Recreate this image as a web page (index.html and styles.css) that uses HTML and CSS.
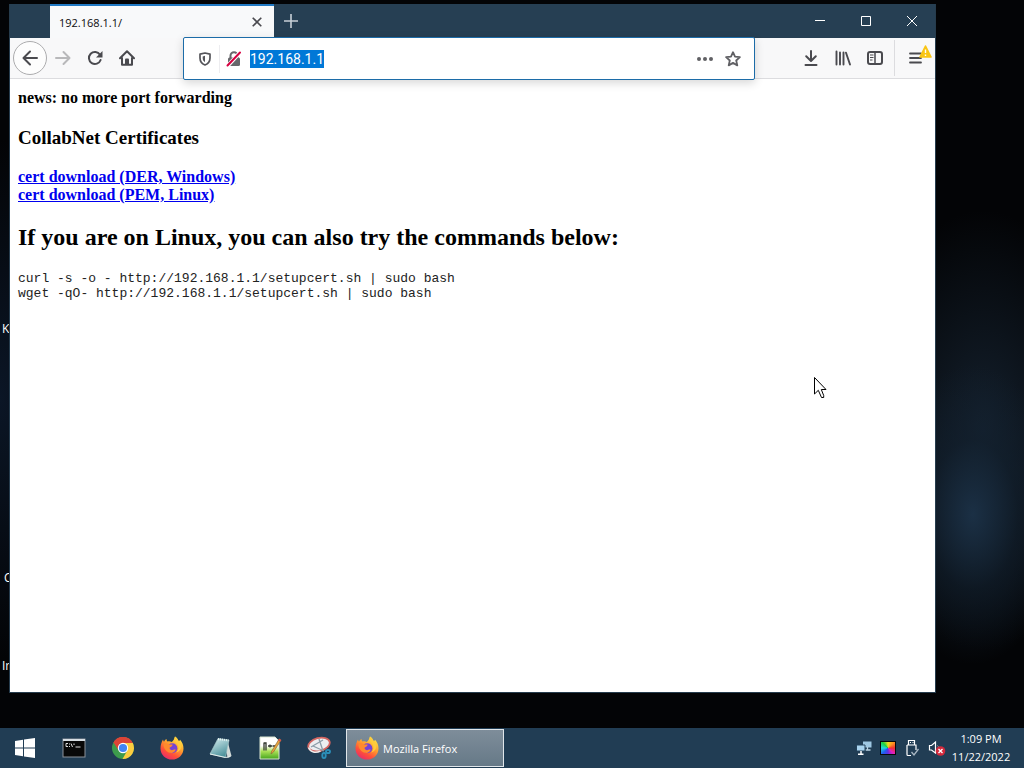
FILE: index.html
```
<!DOCTYPE html>
<html lang="en">
<head>
<meta charset="utf-8">
<title>192.168.1.1/</title>
<link rel="stylesheet" href="styles.css">
</head>
<body>
<svg class="defs" width="0" height="0" aria-hidden="true">
  <defs>
    <linearGradient id="flame" x1="0.8" y1="0" x2="0.2" y2="1">
      <stop offset="0" stop-color="#fff04a"/><stop offset="0.4" stop-color="#ffa02e"/>
      <stop offset="0.7" stop-color="#ff5038"/><stop offset="1" stop-color="#e32673"/>
    </linearGradient>
    <symbol id="firefox" viewBox="0 0 24 24">
      <path fill="url(#flame)" d="M15 .5c2.4 1.300 3.200 3 3.400 4.800 1-.3 1.500-.9 1.700-1.500 2.200 2.400 3.400 5.500 3.400 8.600C23.500 18.800 18.300 23.600 12 23.600S.5 18.800.5 12.500c0-3.500 1-6.500 2.500-9 .2 1 .5 1.600 1 2.200.5-1.200 1.400-2.100 2.500-2.700 0 1 .3 1.900 1 2.500 1.500-.4 3-.2 4.300.5 1.700-1.400 2.800-3.300 3.200-5.500z"/>
      <circle cx="12.300" cy="12.300" r="5" fill="#7543d5"/>
      <path fill="#ff8a2d" d="M3.500 8.500c2-1.500 4.200-1 5.200.1h3.800c.3 1.600-1.200 2.300-2.800 3-.4 1.300.6 2.500 2.200 2.600 1.500 0 2.300-1 3.800-.4-.8 2.300-3.200 3.500-5.600 3-3.700-.8-6.600-4.300-6.600-8.300z"/>
      <path fill="#ffcb3b" d="M15 .5c-1.500 3.200.2 4.800 1.800 6.700 2.300 2.800 2.200 7-.6 9.300 4.300-1 6.300-5.200 4.500-9.400C19.700 5 17 3.500 15 .5z"/>
    </symbol>
  </defs>
</svg>
<div class="desktop">
  <span class="label label-k">K</span>
  <span class="label label-c">C</span>
  <span class="label label-in">Ir</span>

  <main class="workspace">
    <section class="window">
      <header class="titlebar">
        <div class="tab">
          <span class="tab-title">192.168.1.1/</span>
          <button class="tab-close" aria-label="Close tab"><svg width="10" height="10" viewBox="0 0 10 10"><path d="M.7.7l8.600 8.600M9.300.7L.7 9.300" stroke="#4a4a4f" stroke-width="1.600"/></svg></button>
        </div>
        <button class="new-tab" aria-label="New tab"><svg width="14" height="14" viewBox="0 0 14 14"><path d="M7 0v14M0 7h14" stroke="#c8d0d8" stroke-width="1.600"/></svg></button>
        <div class="controls">
          <button aria-label="Minimize"><svg width="12" height="12" viewBox="0 0 12 12"><path d="M1 5.500h10" stroke="#fff"/></svg></button>
          <button aria-label="Maximize"><svg width="12" height="12" viewBox="0 0 12 12"><path d="M1.500 1.500h9v9h-9z" fill="none" stroke="#fff"/></svg></button>
          <button aria-label="Close"><svg width="12" height="12" viewBox="0 0 12 12"><path d="M1 1l10 10M11 1L1 11" stroke="#fff"/></svg></button>
        </div>
      </header>

      <nav class="toolbar">
        <button class="back" aria-label="Back"><svg width="16" height="16" viewBox="0 0 16 16"><path d="M15 8H1.800M8 1.500L1.500 8 8 14.500" fill="none" stroke="#4a4a4f" stroke-width="2" stroke-linecap="round" stroke-linejoin="round"/></svg></button>
        <button class="tool" aria-label="Forward"><svg width="16" height="16" viewBox="0 0 16 16"><path d="M1 8h13.200M8.500 2l6 6-6 6" fill="none" stroke="#b8b8ba" stroke-width="2" stroke-linecap="round" stroke-linejoin="round"/></svg></button>
        <button class="tool" aria-label="Reload"><svg width="16" height="16" viewBox="0 0 16 16"><path d="M13 4.800A6 6 0 1 0 13.600 10" fill="none" stroke="#4a4a4f" stroke-width="2" stroke-linecap="round"/><path d="M15.500 1v6.500H9z" fill="#4a4a4f"/></svg></button>
        <button class="tool" aria-label="Home"><svg width="16" height="16" viewBox="0 0 16 16"><path d="M1 8.200L8 1.200l7 7M3 8v6.800h10V8" fill="none" stroke="#4a4a4f" stroke-width="2" stroke-linecap="round" stroke-linejoin="round"/><path d="M6 15V9.500a1 1 0 0 1 1-1h2a1 1 0 0 1 1 1V15z" fill="#4a4a4f"/></svg></button>
        <div class="urlbar">
          <button class="url-icon" aria-label="Tracking protection"><svg width="14" height="14" viewBox="0 0 14 14"><path d="M7 1L12 2.200V6c0 3.500-2 5.800-5 7-3-1.200-5-3.500-5-7V2.200z" fill="none" stroke="#55555a" stroke-width="1.700" stroke-linejoin="round"/><path d="M7 3.800v6.400C5.300 9.200 4.700 7.800 4.700 6V4.400z" fill="#55555a"/></svg></button>
          <button class="url-icon lock" aria-label="Connection not secure"><svg width="16" height="16" viewBox="0 0 16 16"><path d="M4.500 7V4.800a3.500 3.500 0 0 1 7 0V7" fill="none" stroke="#67676b" stroke-width="2"/><rect x="2" y="6.500" width="12" height="8.500" rx="1.500" fill="#67676b"/><path d="M1 15.500L14.500 1" stroke="#fff" stroke-width="4"/><path d="M1.500 14.500L14 1.500" stroke="#d70040" stroke-width="2" stroke-linecap="round"/></svg></button>
          <input class="url" type="text" value="192.168.1.1" aria-label="Address" spellcheck="false">
          <span class="url-space"></span>
          <button class="url-icon" aria-label="Page actions"><svg width="16" height="16" viewBox="0 0 16 16"><g fill="#606064"><circle cx="2" cy="8" r="2"/><circle cx="8" cy="8" r="2"/><circle cx="14" cy="8" r="2"/></g></svg></button>
          <button class="url-icon" aria-label="Bookmark this page"><svg width="16" height="16" viewBox="0 0 16 16"><path d="M8 1.200l2 4.500 4.900.5-3.700 3.300 1.100 4.900L8 11.900l-4.300 2.500 1.100-4.900L1.100 6.200 6 5.700z" fill="none" stroke="#606064" stroke-width="1.800" stroke-linejoin="round"/></svg></button>
        </div>
        <button class="tool" aria-label="Downloads"><svg width="16" height="16" viewBox="0 0 16 16"><path d="M8 1v9.500M3.200 6.200L8 11l4.800-4.800M2.500 15h11" fill="none" stroke="#4a4a4f" stroke-width="2" stroke-linecap="round" stroke-linejoin="round"/></svg></button>
        <button class="tool" aria-label="Library"><svg width="16" height="16" viewBox="0 0 16 16"><path d="M1.500 1.500v13M5 2.500v12M8.500 2.500v12M11 2.700l4 11.800" fill="none" stroke="#4a4a4f" stroke-width="1.900" stroke-linecap="round"/></svg></button>
        <button class="tool" aria-label="Sidebars"><svg width="16" height="16" viewBox="0 0 16 16"><rect x="1" y="2" width="14" height="12" rx="2" fill="none" stroke="#4a4a4f" stroke-width="2"/><path d="M8 2v12" stroke="#4a4a4f" stroke-width="1.500"/><path d="M3 5h3.500M3 7.500h3.500M3 10h2.500" stroke="#4a4a4f"/></svg></button>
        <button class="tool menu" aria-label="Menu"><svg width="14" height="14" viewBox="0 0 14 14"><path d="M2 2.500h11M2 7h11M2 11.500h11" stroke="#4a4a4f" stroke-width="1.800" stroke-linecap="round"/></svg><svg class="warning" width="13" height="13" viewBox="0 0 13 13"><path d="M6.500 1l5.500 11H1z" fill="#f9c515" stroke="#f9c515" stroke-width="1.600" stroke-linejoin="round"/><path d="M6.500 4.500V8M6.500 9.500V11" stroke="#fff" stroke-width="1.400"/></svg></button>
      </nav>

      <article class="page">
        <h4>news: no more port forwarding</h4>
        <h3>CollabNet Certificates</h3>
        <p class="links"><a href="#der">cert download (DER, Windows)</a><br><a href="#pem">cert download (PEM, Linux)</a></p>
        <h2>If you are on Linux, you can also try the commands below:</h2>
        <pre>curl -s -o - http://192.168.1.1/setupcert.sh | sudo bash
wget -qO- http://192.168.1.1/setupcert.sh | sudo bash</pre>
      </article>
    </section>
  </main>

  <footer class="taskbar">
    <button class="app" aria-label="Start"><svg width="22" height="22" viewBox="0 0 22 22"><path fill="#fff" d="M1 4l8-1.200v7.700H1zM10 2.600L21 1v9.500H10zM1 11.500h8v7.700L1 18zM10 11.500h11V21l-11-1.600z"/></svg></button>
    <button class="app" aria-label="Command Prompt"><svg width="24" height="24" viewBox="0 0 24 24"><rect x="1" y="3" width="22" height="18" fill="#080808" stroke="#8c9299"/><path d="M1 4h22" stroke="#d7dde2" stroke-width="2"/><path d="M6 7.500H4v3h2M7.500 7.500v1M7.500 10v1M9 7.500l1.500 3.500M12 7.500v1.500M13.500 11h5" fill="none" stroke="#ddd"/></svg></button>
    <button class="app" aria-label="Google Chrome"><svg width="24" height="24" viewBox="0 0 24 24"><circle cx="12" cy="12" r="11" fill="#3d9b4c"/><path d="M12 12L2.500 6.500A11 11 0 0 1 21.500 6.500z" fill="#dc4437"/><path d="M12 7h9.800A11 11 0 0 1 11.500 23l4.800-8.500z" fill="#fccc3f"/><path d="M2.500 6.500L7.700 14.500 12 7h9.800A11 11 0 0 0 2.500 6.500z" fill="#dc4437"/><circle cx="12" cy="12" r="5.200" fill="#fff"/><circle cx="12" cy="12" r="4.100" fill="#4285f4"/></svg></button>
    <button class="app" aria-label="Firefox"><svg width="24" height="24"><use href="#firefox"/></svg></button>
    <button class="app" aria-label="Notepad"><svg width="24" height="24" viewBox="0 0 24 24"><defs><linearGradient id="note" x2="0.5" y2="1"><stop offset="0" stop-color="#d9f0f2"/><stop offset="1" stop-color="#4d929c"/></linearGradient></defs><path d="M18 3l4.500 17-4 2L16 5z" fill="#d3dbd9"/><path d="M9 2.500L20 4l-3.500 17.500L1 18z" fill="url(#note)" stroke="#a7c8ca" stroke-width=".7"/><path d="M9 3l10.500 1.500" stroke="#e9f3f2" stroke-width="2" stroke-dasharray="1 1"/><path d="M1 18l15.500 3.500 5-1" fill="none" stroke="#e6efed"/></svg></button>
    <button class="app" aria-label="Notepad++"><svg width="24" height="24" viewBox="0 0 24 24"><defs><linearGradient id="npp" x2="0" y2="1"><stop offset="0.4" stop-color="#fff"/><stop offset="0.65" stop-color="#a9e057"/><stop offset="1" stop-color="#45a51d"/></linearGradient></defs><path d="M2 1h15l4 4v18H2z" fill="url(#npp)" stroke="#d9e5d1"/><path d="M6 6.500v8M6 7h2v7.500M10 10h4M12 8.500v3M14.500 10H18" fill="none" stroke="#30362d" stroke-width="1.300"/><path d="M13.500 15.500L21 3l2 1.300L15.500 16l-2.500 2z" fill="#e9a43b" stroke="#7d6035" stroke-width=".6"/><path d="M20 4.500L21.200 2.500 23.400 4l-1.200 1.800z" fill="#d3564d"/></svg></button>
    <button class="app" aria-label="Snipping Tool"><svg width="24" height="24" viewBox="0 0 24 24"><ellipse cx="12" cy="8.500" rx="11" ry="6.500" transform="rotate(-15 12 8.500)" fill="#eceef0" stroke="#d46560" stroke-width="1.800"/><path d="M4 11L16 4M12 3l4 12M6 10l11 5" stroke="#8b9da8" stroke-width="1.300"/><path d="M1.500 11.500c2 5 7 6 12 3.500" fill="none" stroke="#eee" stroke-width="1.500"/><g fill="none" stroke="#2b8fb9" stroke-width="1.900"><ellipse cx="21" cy="15.500" rx="2" ry="1.600"/><ellipse cx="17" cy="19.500" rx="1.700" ry="2.600"/></g></svg></button>
    <button class="task"><svg width="24" height="24"><use href="#firefox"/></svg><span>Mozilla Firefox</span></button>
    <div class="tray">
      <svg width="16" height="16" viewBox="0 0 16 16" aria-label="Network"><path d="M7 1.500h8.500v6H7z" fill="#9fc8e3"/><path d="M11.500 7v3M9.500 10h5" stroke="#b9d3e3" stroke-width="1.300"/><path d="M.5 5h8.500v6H.5z" fill="#a9d4ef" stroke="#24425a"/><path d="M5 11v3M2 14.300h5.500" stroke="#fff" stroke-width="1.500"/></svg>
      <span class="color-wheel" role="img" aria-label="Display settings"></span>
      <svg width="16" height="18" viewBox="0 0 16 18" aria-label="USB device"><path d="M4.500 6V1.500h6V6M3 6h9v5M7 16.500H4a1 1 0 0 1-1-1V6M6 3.500h1M8.500 3.500h1" fill="none" stroke="#fff" stroke-width="1.200"/><path d="M7.500 13l2.500 3 4.500-6" fill="none" stroke="#a9b7c3" stroke-width="1.300"/></svg>
      <svg width="18" height="16" viewBox="0 0 18 16" aria-label="Volume muted"><path d="M1.500 5.500h2L7.500 2v11L3.500 10h-2z" fill="none" stroke="#fff" stroke-width="1.200"/><path d="M9.500 5.500c1 1 1 1.500 1 2" fill="none" stroke="#9daab4"/><circle cx="12.500" cy="11" r="4.800" fill="#d3293c"/><path d="M10.500 9l4 4M14.500 9l-4 4" stroke="#fff" stroke-width="1.300"/></svg>
    </div>
    <div class="clock"><time>1:09 PM</time><time>11/22/2022</time></div>
  </footer>

  <svg class="cursor" width="13" height="22" viewBox="0 0 13 22" aria-hidden="true"><path d="M.5.500V17L4.300 13.300 7.500 20.500h2.200V18.500L7.300 12.500H12z" fill="#fff" stroke="#000"/></svg>
</div>
</body>
</html>
```
FILE: styles.css
```
* { box-sizing: border-box; }

body {
  margin: 0;
  font-family: "Open Sans", "Noto Sans", sans-serif;
  font-size: 11px;
}

button {
  display: flex;
  align-items: center;
  justify-content: center;
  flex: none;
  padding: 0;
  border: 0;
  background: none;
  font: inherit;
}

.defs { position: absolute; }

.desktop {
  position: relative;
  display: flex;
  flex-direction: column;
  min-height: 100vh;
  overflow: hidden;
  background:
    radial-gradient(ellipse 90px 150px at 95% 67%, #1b3045, rgba(18, 32, 46, 0.6) 50%, transparent),
    radial-gradient(ellipse 120px 220px at 96% 56%, #14202d, transparent),
    radial-gradient(ellipse 90px 260px at 0% 52%, #0b1626, transparent),
    #030406;
}

.label {
  position: absolute;
  color: #fff;
  font-size: 12px;
  line-height: 16px;
}
.label-k { left: 2px; top: 321px; }
.label-c { left: 4px; top: 570px; }
.label-in { left: 2px; top: 658px; }

.workspace {
  position: relative;
  display: flex;
  flex: 1;
  padding: 4px 88px 35px 9px;
}

.window {
  display: flex;
  flex: 1;
  flex-direction: column;
  min-width: 0;
  border: 1px solid #263c4d;
  border-top: 0;
  background: #fff;
}

.titlebar {
  display: flex;
  height: 34px;
  padding-left: 40px;
  background: #263f53;
}

.tab {
  display: flex;
  align-items: center;
  justify-content: space-between;
  width: 224px;
  padding: 0 8px 0 9px;
  border-top: 2px solid #2079c4;
  background: #f8f9fa;
  color: #0c0c0d;
}
.tab-close { width: 18px; height: 18px; }
.new-tab { width: 34px; }
.controls { display: flex; margin-left: auto; }
.controls button { width: 46px; }

.toolbar {
  display: flex;
  align-items: center;
  height: 41px;
  padding-left: 3px;
  border-bottom: 1px solid #dcdcdf;
  background: #f8f8f9;
}

.back {
  width: 34px;
  height: 34px;
  border: 1px solid #acacae;
  border-radius: 50%;
  background: #fdfdfd;
}

.tool { width: 32px; height: 32px; }

.menu {
  position: relative;
  width: 41px;
  height: 36px;
  margin-left: 3px;
  border-left: 1px solid #dcdcdf;
}
.warning { position: absolute; top: 5px; right: 3px; }

.urlbar {
  display: flex;
  align-items: center;
  align-self: stretch;
  flex: 1;
  min-width: 200px;
  margin: -1px 40px -2px;
  padding: 0 7px;
  border: 1px solid #1c6ca8;
  border-radius: 2px;
  background: #fff;
  box-shadow: 0 3px 10px rgba(0, 0, 0, 0.16);
  z-index: 1;
}
.url-icon { width: 28px; height: 28px; }
.lock { border-left: 1px solid #ededf0; }
.url {
  width: 74px;
  height: 18px;
  margin-left: 3px;
  padding: 0;
  border: 0;
  outline: 0;
  background: #0078d7;
  color: #fff;
  font-family: Roboto, "Open Sans", sans-serif;
  font-size: 14px;
  line-height: 18px;
}
.url-space { flex: 1; }

.page {
  flex: 1;
  padding: 10px 8px;
  color: #000;
  font-family: "Liberation Serif", serif;
}
.page h4, .page h3, .page h2, .page p, .page pre { margin: 0; }
.page h4, .links { font-size: 16px; font-weight: bold; line-height: 18px; }
.page h3 { margin: 20px 0 19px; font-size: 19px; line-height: 22px; }
.page h2 { margin: 20px 0; font-size: 24px; line-height: 27px; }
.page a { color: #0000ee; }
.page pre {
  color: #222;
  font-family: "Liberation Mono", monospace;
  font-size: 13px;
  line-height: 15px;
}

.taskbar {
  display: flex;
  height: 40px;
  background: #213d54;
  color: #fff;
}
.app { width: 49px; }

.task {
  justify-content: flex-start;
  gap: 4px;
  width: 158px;
  margin: 1px 0 1px 3px;
  padding-left: 8px;
  border: 1px solid #e0e6ea;
  background: linear-gradient(#7e8d9a, #667987);
  color: #fff;
}

.tray {
  display: flex;
  align-items: center;
  gap: 8px;
  margin-left: auto;
  padding-right: 4px;
}
.color-wheel {
  width: 16px;
  height: 14px;
  border: 1px solid #080808;
  background: conic-gradient(#f0e020, #ff9420, #f03030, #e020c0, #6030e0, #2060f0, #20d8e0, #20d040, #f0e020);
}

.clock {
  display: flex;
  flex-direction: column;
  justify-content: center;
  width: 74px;
  padding-right: 12px;
  line-height: 18px;
  text-align: center;
}

.cursor { position: absolute; left: 814px; top: 377px; }
```
